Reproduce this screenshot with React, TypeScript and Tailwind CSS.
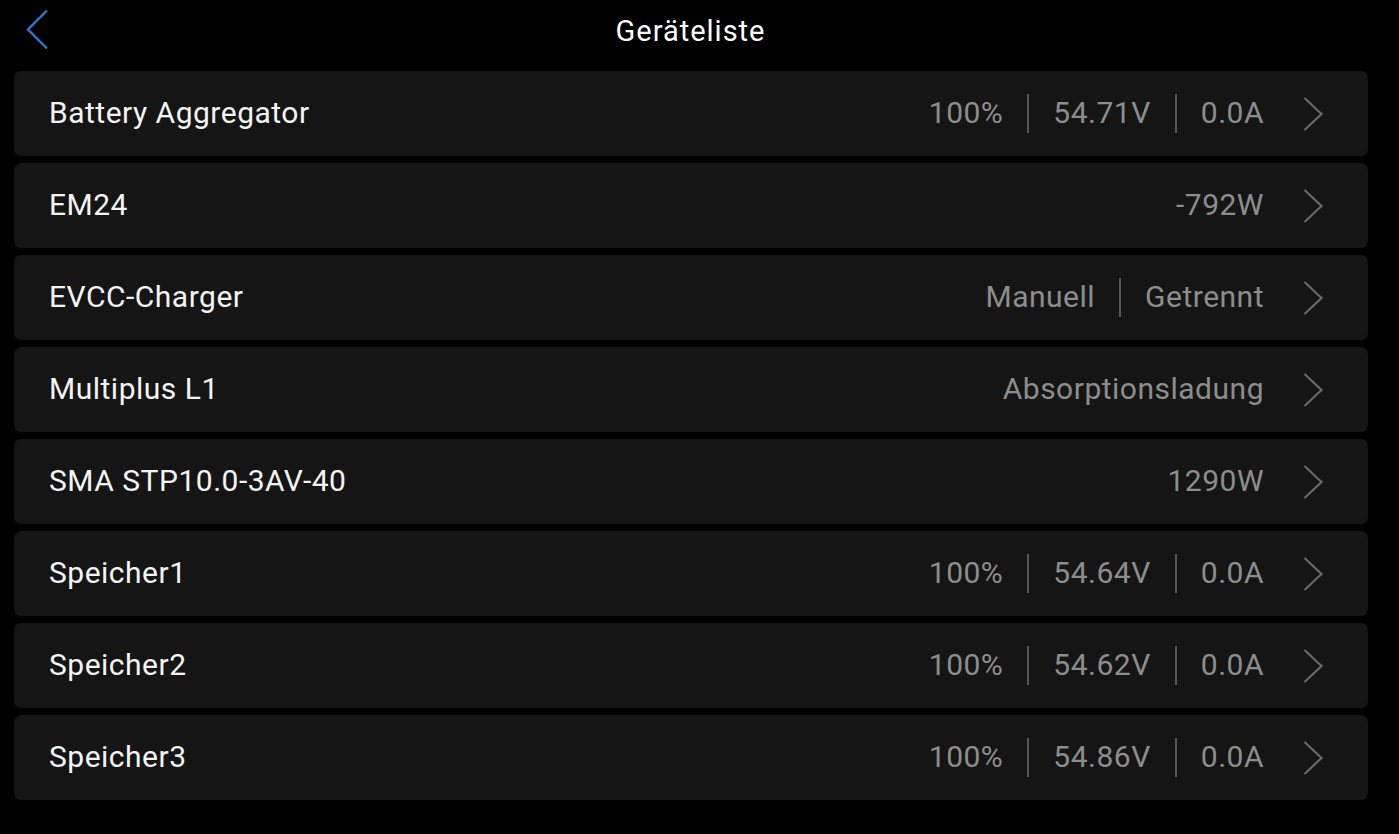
type Device = {
  name: string;
  values: string[];
};

const devices: Device[] = [
  { name: "Battery Aggregator", values: ["100%", "54.71V", "0.0A"] },
  { name: "EM24", values: ["-792W"] },
  { name: "EVCC-Charger", values: ["Manuell", "Getrennt"] },
  { name: "Multiplus L1", values: ["Absorptionsladung"] },
  { name: "SMA STP10.0-3AV-40", values: ["1290W"] },
  { name: "Speicher1", values: ["100%", "54.64V", "0.0A"] },
  { name: "Speicher2", values: ["100%", "54.62V", "0.0A"] },
  { name: "Speicher3", values: ["100%", "54.86V", "0.0A"] },
];

function Chevron() {
  return (
    <svg width="22" height="36" viewBox="0 0 22 36" fill="none" className="ml-[38px] shrink-0">
      <path d="M2.5 2 L19.5 18 L2.5 34" stroke="#696969" strokeWidth="2.2" />
    </svg>
  );
}

function BackIcon() {
  return (
    <svg width="26" height="44" viewBox="0 0 26 44" fill="none">
      <path d="M22 2.5 L3 21.5 L22 40.5" stroke="#2a7ad2" strokeWidth="2.4" />
    </svg>
  );
}

function DeviceRow({ device }: { device: Device }) {
  return (
    <div className="flex h-[85px] items-center rounded-[7px] bg-[#151515] pl-[35px] pr-[44px] text-[30px] tracking-[0.5px]">
      <span className="flex-1 pb-[2px] text-[#f4f4f4]">{device.name}</span>
      <div className="flex items-center text-[#8d8d8d]">
        {device.values.map((v, i) => (
          <div key={i} className="flex items-center">
            {i > 0 && <div className="mx-6 h-[39px] w-[2px] bg-[#555552]" />}
            <span className="pb-[2px]">{v}</span>
          </div>
        ))}
      </div>
      <Chevron />
    </div>
  );
}

export default function App() {
  return (
    <div className="min-h-[834px] w-full bg-black font-['Roboto',sans-serif]">
      <header className="relative flex h-[62px] items-center justify-center pr-[18px]">
        <button className="absolute left-[25px] top-[8px]">
          <BackIcon />
        </button>
        <h1 className="pt-[1px] text-[29px] tracking-[1px] text-white">Geräteliste</h1>
      </header>
      <div className="flex flex-col gap-[7px] pl-[14px] pr-[31px] pt-[9px]">
        {devices.map((d) => (
          <DeviceRow key={d.name} device={d} />
        ))}
      </div>
    </div>
  );
}
